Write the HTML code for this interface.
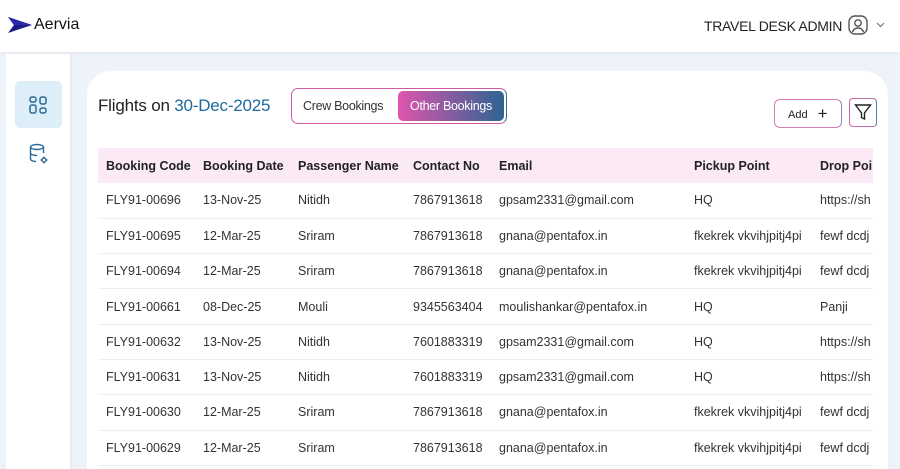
<!DOCTYPE html>
<html><head><meta charset="utf-8"><style>
*{box-sizing:border-box;margin:0;padding:0}
html,body{width:900px;height:469px;overflow:hidden}
body{background:#eef3f9;font-family:"Liberation Sans",sans-serif;color:#222;position:relative}
.hdr{position:absolute;left:0;top:0;width:900px;height:54px;background:#fff;border-bottom:2px solid #e8ecf1}
.side{position:absolute;left:6px;top:54px;width:66px;height:415px;background:#fff;border-right:2px solid #e6ebf0}
.card{position:absolute;left:87px;top:71px;width:801px;height:398px;background:#fff;border-radius:24px 24px 0 0;overflow:hidden}
.tw{position:absolute;left:11px;top:77px;width:775px;height:330px;overflow:hidden}
table{border-collapse:collapse;font-size:12.5px;white-space:nowrap;table-layout:fixed;width:850px}
th{background:#fbeaf5;text-align:left;font-weight:bold;height:35px;padding:0 0 0 8px;overflow:hidden}
td{height:35.3px;padding:0 0 0 8px;border-bottom:1px solid #eceef0;color:#333;overflow:hidden}
</style></head><body>
<div class="hdr">
<svg style="position:absolute;left:7px;top:16px" width="26" height="18" viewBox="0 0 26 18"><path d="M1 1 L25 9 L1 17 L7 9 Z" fill="#1c1c8a"/><path d="M1 1 L25 9 L7 9Z" fill="#2a2aa8"/></svg>
<div style="position:absolute;left:34px;top:16px;font-size:16px;color:#111">Aervia</div>
<div style="position:absolute;left:704px;top:18px;font-size:14px;color:#222;letter-spacing:-0.3px">TRAVEL DESK ADMIN</div>
<svg style="position:absolute;left:848px;top:15px" width="20" height="20" viewBox="0 0 20 20" fill="none" stroke="#555" stroke-width="1.4"><rect x="1" y="1" width="18" height="18" rx="6"/><circle cx="10" cy="8" r="3.2"/><path d="M4.5 17c1-3 3-4 5.5-4s4.5 1 5.5 4"/></svg>
<svg style="position:absolute;left:876px;top:22px" width="9" height="6" viewBox="0 0 9 6" fill="none" stroke="#777" stroke-width="1.2"><path d="M1 1l3.5 3.5L8 1"/></svg>
</div>
<div class="side">
<div style="position:absolute;left:9px;top:27px;width:47px;height:47px;background:#ddeef9;border-radius:5px"></div>
<svg style="position:absolute;left:23px;top:42px" width="18" height="18" viewBox="0 0 18 18" fill="none" stroke="#2a6a9a" stroke-width="1.5"><rect x="1" y="1" width="6" height="5" rx="2"/><rect x="11" y="1" width="6" height="7" rx="2"/><rect x="1" y="9" width="6" height="8" rx="2"/><rect x="11" y="12" width="6" height="5" rx="2"/></svg>
<svg style="position:absolute;left:23px;top:89px" width="20" height="22" viewBox="0 0 20 22" fill="none" stroke="#2a6a9a" stroke-width="1.4"><ellipse cx="8" cy="4" rx="6.5" ry="2.5"/><path d="M1.5 4v12c0 1.4 2.5 2.5 5.5 2.5M14.5 4v6M1.5 10c0 1.4 3 2.5 6.5 2.5"/><circle cx="15" cy="17" r="2"/><path d="M15 13.5v1.5M15 19v1.5M11.5 17h1.5M17 17h1.5"/></svg>
</div>
<div class="card">
<div style="position:absolute;left:11px;top:25px;font-size:17px;color:#222;letter-spacing:-0.2px">Flights on <span style="color:#1f6a9c">30-Dec-2025</span></div>
<div style="position:absolute;left:204px;top:17px;width:216px;height:36px;border:1.5px solid #d05aa6;border-right-color:#3a6a9a;border-radius:7px"></div>
<div style="position:absolute;left:216px;top:28px;font-size:12.5px;color:#333;letter-spacing:-0.3px">Crew Bookings</div>
<div style="position:absolute;left:311px;top:20px;width:106px;height:30px;border-radius:5px;background:linear-gradient(90deg,#de55ad,#2d6492);color:#fff;font-size:12.5px;text-align:center;line-height:30px;letter-spacing:-0.3px">Other Bookings</div>
<div style="position:absolute;left:687px;top:28px;width:68px;height:29px;border:1.5px solid #d87ab8;border-right-color:#7a8fb8;border-radius:6px;font-size:11px;line-height:26px;padding-left:13px">Add <span style="font-size:17px;margin-left:7px;position:relative;top:1px">+</span></div>
<div style="position:absolute;left:762px;top:27px;width:28px;height:29px;border:1.5px solid #c86ab0;border-right-color:#5a7aaa;border-radius:4px"></div>
<svg style="position:absolute;left:767px;top:32px" width="18" height="19" viewBox="0 0 18 19" fill="none" stroke="#222" stroke-width="1.4"><path d="M1.5 2h15l-6 8v6l-3-1.5V10z"/></svg>
<div class="tw">
<table>
<colgroup><col style="width:97px"><col style="width:95px"><col style="width:115px"><col style="width:86px"><col style="width:195px"><col style="width:126px"><col style="width:136px"></colgroup>
<tr><th>Booking Code</th><th>Booking Date</th><th>Passenger Name</th><th>Contact No</th><th>Email</th><th>Pickup Point</th><th>Drop Point</th></tr>
<tr><td>FLY91-00696</td><td>13-Nov-25</td><td>Nitidh</td><td>7867913618</td><td>gpsam2331@gmail.com</td><td>HQ</td><td>https://sh</td></tr>
<tr><td>FLY91-00695</td><td>12-Mar-25</td><td>Sriram</td><td>7867913618</td><td>gnana@pentafox.in</td><td>fkekrek vkvihjpitj4pi</td><td>fewf dcdj</td></tr>
<tr><td>FLY91-00694</td><td>12-Mar-25</td><td>Sriram</td><td>7867913618</td><td>gnana@pentafox.in</td><td>fkekrek vkvihjpitj4pi</td><td>fewf dcdj</td></tr>
<tr><td>FLY91-00661</td><td>08-Dec-25</td><td>Mouli</td><td>9345563404</td><td>moulishankar@pentafox.in</td><td>HQ</td><td>Panji</td></tr>
<tr><td>FLY91-00632</td><td>13-Nov-25</td><td>Nitidh</td><td>7601883319</td><td>gpsam2331@gmail.com</td><td>HQ</td><td>https://sh</td></tr>
<tr><td>FLY91-00631</td><td>13-Nov-25</td><td>Nitidh</td><td>7601883319</td><td>gpsam2331@gmail.com</td><td>HQ</td><td>https://sh</td></tr>
<tr><td>FLY91-00630</td><td>12-Mar-25</td><td>Sriram</td><td>7867913618</td><td>gnana@pentafox.in</td><td>fkekrek vkvihjpitj4pi</td><td>fewf dcdj</td></tr>
<tr><td>FLY91-00629</td><td>12-Mar-25</td><td>Sriram</td><td>7867913618</td><td>gnana@pentafox.in</td><td>fkekrek vkvihjpitj4pi</td><td>fewf dcdj</td></tr>
</table>
</div></div>
</body></html>
